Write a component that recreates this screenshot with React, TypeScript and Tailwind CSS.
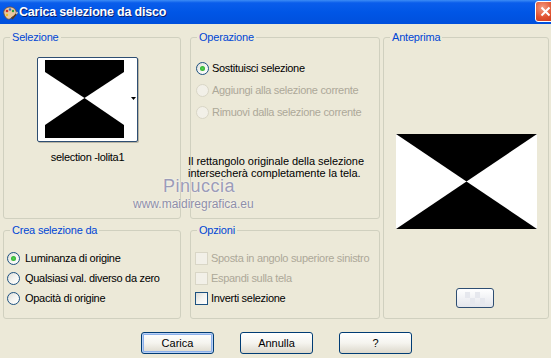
import React from "react";

const FONT = { fontFamily: '"Liberation Sans", Arial, sans-serif' };

function Group({
  title,
  className,
  children,
}: {
  title: string;
  className: string;
  children?: React.ReactNode;
}) {
  return (
    <fieldset className={`border border-[#D0D0BF] rounded-[3px] min-w-0 ${className}`}>
      <legend className="ml-[6px] px-[2px] text-[#0046D5] text-[11px] leading-[13px] tracking-[-0.2px]">{title}</legend>
      {children}
    </fieldset>
  );
}

function Radio({ checked, disabled }: { checked?: boolean; disabled?: boolean }) {
  return (
    <span
      className={`flex items-center justify-center shrink-0 w-[13px] h-[13px] rounded-full border ${
        disabled
          ? "border-[#D9D6C6] bg-[#F2F0E8]"
          : "border-[#1C5180] bg-gradient-to-br from-[#DCDCD7] via-[#F4F4F1] to-white"
      }`}
    >
      {checked && <span className="w-[5px] h-[5px] rounded-full bg-[radial-gradient(circle,#55D455,#21A121)]" />}
    </span>
  );
}

function Check({ disabled }: { disabled?: boolean }) {
  return (
    <span
      className={`block shrink-0 w-[13px] h-[13px] border ${
        disabled
          ? "border-[#D9D6C6] bg-[#F2F0E8]"
          : "border-[#1C5180] bg-gradient-to-br from-[#DCDCD7] via-[#F4F4F1] to-white"
      }`}
    />
  );
}

function XPButton({ label, def }: { label: string; def?: boolean }) {
  return (
    <button
      className={`w-[73px] h-[22px] rounded-[3px] border border-[#003C74] bg-gradient-to-b from-white via-[#F5F4EF] to-[#DCD8CC] text-[11px] text-black leading-none ${
        def ? "shadow-[inset_0_0_0_1px_#B9D1F5,inset_0_0_0_2px_#8CB0EA]" : ""
      }`}
    >
      {label}
    </button>
  );
}

function TitleIcon() {
  return (
    <svg width="16" height="16" viewBox="0 0 16 16">
      <path d="M2 9 C1 5 4 2 8 2 C12 2 15 5 14 9 C13 12 10 11 9 13 C8 15 4 15 2 9 Z" fill="#E8C8A0" stroke="#7A4A2A" strokeWidth="0.8" />
      <circle cx="5" cy="6" r="1.3" fill="#D0302A" />
      <circle cx="8" cy="4.5" r="1.2" fill="#2A6AD0" />
      <circle cx="11" cy="6" r="1.2" fill="#2AA040" />
      <circle cx="5" cy="10" r="1.2" fill="#F0C020" />
      <path d="M10 14 L15 8" stroke="#5A3A1A" strokeWidth="1.6" />
      <path d="M14 9 L15.5 7" stroke="#C0C0C0" strokeWidth="1.6" />
    </svg>
  );
}

export default function App() {
  return (
    <div className="w-[551px] h-[358px] bg-[#ECE9D8] overflow-hidden relative text-black" style={FONT}>
      {/* Title bar */}
      <div className="h-[24px] flex items-center bg-[linear-gradient(to_bottom,#3C8CF5_0%,#0A5DEB_12%,#0056E6_50%,#0050DC_100%)]">
        <div className="ml-[2px] mt-[1px] w-[16px] h-[16px]">
          <TitleIcon />
        </div>
        <span className="ml-[1px] text-white font-bold text-[12.5px] tracking-[-0.2px] [text-shadow:1px_1px_0_#0A1E6E]">
          Carica selezione da disco
        </span>
        <div className="ml-auto self-start mt-[1px] w-[16px] h-[21px] overflow-hidden">
          <div className="w-[21px] h-[21px] rounded-[3px] border border-white bg-[radial-gradient(circle_at_35%_30%,#F39A80,#E0502E_55%,#C6361A)] flex items-center justify-center">
            <svg width="11" height="11" viewBox="0 0 11 11">
              <path d="M1.5 1.5 L9.5 9.5 M9.5 1.5 L1.5 9.5" stroke="white" strokeWidth="2" />
            </svg>
          </div>
        </div>
      </div>

      {/* Body */}
      <div className="flex pl-[3px] pt-[7px] tracking-[-0.3px]">
        {/* Left column */}
        <div className="w-[178px] flex flex-col gap-[5px]">
          <Group title="Selezione" className="h-[188px]">
            <div className="ml-[33px] w-[101px] mt-[13px] flex flex-col items-center">
              <div className="relative w-[101px] h-[85px] bg-white border border-[#2E4E72] rounded-[2px] shadow-[1px_1px_0_#B8B4A4]">
                <svg className="absolute left-[7px] top-[2px]" width="79" height="78" viewBox="0 0 79 78">
                  <polygon points="0,0 79,0 79,12 39.5,38 0,12" fill="black" />
                  <polygon points="0,65 39.5,38 79,65 79,78 0,78" fill="black" />
                </svg>
                <svg className="absolute left-[93px] top-[39px]" width="5" height="3" viewBox="0 0 5 3">
                  <polygon points="0,0 5,0 2.5,3" fill="black" />
                </svg>
              </div>
              <div className="mt-[9px] text-[11px] leading-[13px] whitespace-nowrap">selection -lolita1</div>
            </div>
          </Group>
          <Group title="Crea selezione da" className="h-[95px]">
            <div className="mt-[11px] pl-[3px] flex flex-col text-[11px]">
              <div className="h-[20px] flex items-center gap-[5px]">
                <Radio checked />
                <span>Luminanza di origine</span>
              </div>
              <div className="h-[20px] flex items-center gap-[5px]">
                <Radio />
                <span>Qualsiasi val. diverso da zero</span>
              </div>
              <div className="h-[20px] flex items-center gap-[5px]">
                <Radio />
                <span>Opacità di origine</span>
              </div>
            </div>
          </Group>
        </div>

        {/* Middle column */}
        <div className="ml-[9px] w-[190px] flex flex-col gap-[5px]">
          <Group title="Operazione" className="h-[188px]">
            <div className="mt-[13px] pl-[5px] flex flex-col text-[11px]">
              <div className="h-[22px] flex items-center gap-[3px]">
                <Radio checked />
                <span>Sostituisci selezione</span>
              </div>
              <div className="h-[22px] flex items-center gap-[3px] text-[#ACA899]">
                <Radio disabled />
                <span>Aggiungi alla selezione corrente</span>
              </div>
              <div className="h-[22px] flex items-center gap-[3px] text-[#ACA899]">
                <Radio disabled />
                <span>Rimuovi dalla selezione corrente</span>
              </div>
            </div>
            <p className="mt-[32px] -ml-[3px] text-[11px] leading-[12px] tracking-[-0.05px] whitespace-nowrap">
              Il rettangolo originale della selezione
              <br />
              intersecherà completamente la tela.
            </p>
          </Group>
          <Group title="Opzioni" className="h-[95px]">
            <div className="mt-[11px] pl-[4px] flex flex-col text-[11px]">
              <div className="h-[20px] flex items-center gap-[3px] text-[#ACA899]">
                <Check disabled />
                <span className="whitespace-nowrap">Sposta in angolo superiore sinistro</span>
              </div>
              <div className="h-[20px] flex items-center gap-[3px] text-[#ACA899]">
                <Check disabled />
                <span>Espandi sulla tela</span>
              </div>
              <div className="h-[20px] flex items-center gap-[3px]">
                <Check />
                <span>Inverti selezione</span>
              </div>
            </div>
          </Group>
        </div>

        {/* Right column */}
        <Group title="Anteprima" className="ml-[3px] w-[166px] h-[288px]">
          <svg className="ml-[12px] mt-[90px] block" width="141" height="95" viewBox="0 0 141 95">
            <rect x="0" y="0" width="141" height="95" fill="white" />
            <polygon points="0,0 141,0 70.5,47.5" fill="black" />
            <polygon points="0,95 141,95 70.5,47.5" fill="black" />
          </svg>
          <div className="ml-[72px] mt-[59px] w-[38px] h-[20px] rounded-[3px] border border-[#2E4E72] bg-gradient-to-b from-white to-[#E4E6EC] flex items-center justify-center">
            <svg width="20" height="12" viewBox="0 0 20 12">
              <rect x="0" y="0" width="5" height="6" fill="#E6E8EE" />
              <rect x="10" y="0" width="5" height="6" fill="#E6E8EE" />
              <rect x="5" y="6" width="5" height="6" fill="#E6E8EE" />
              <rect x="15" y="6" width="5" height="6" fill="#E6E8EE" />
            </svg>
          </div>
        </Group>
      </div>

      {/* Buttons */}
      <div className="mt-[13px] ml-[141px] flex gap-[26px]">
        <XPButton label="Carica" def />
        <XPButton label="Annulla" />
        <XPButton label="?" />
      </div>

      {/* Watermark */}
      <div className="absolute left-[163px] top-[177px] text-[18px] leading-[18px] text-[#9C9CB8] tracking-[0.5px] [text-shadow:0_0_2px_white]">
        Pinuccia
      </div>
      <div className="absolute left-[133px] top-[198px] text-[12px] leading-[12px] text-[#8E8EA8] [text-shadow:0_0_2px_white]">
        www.maidiregrafica.eu
      </div>
    </div>
  );
}
